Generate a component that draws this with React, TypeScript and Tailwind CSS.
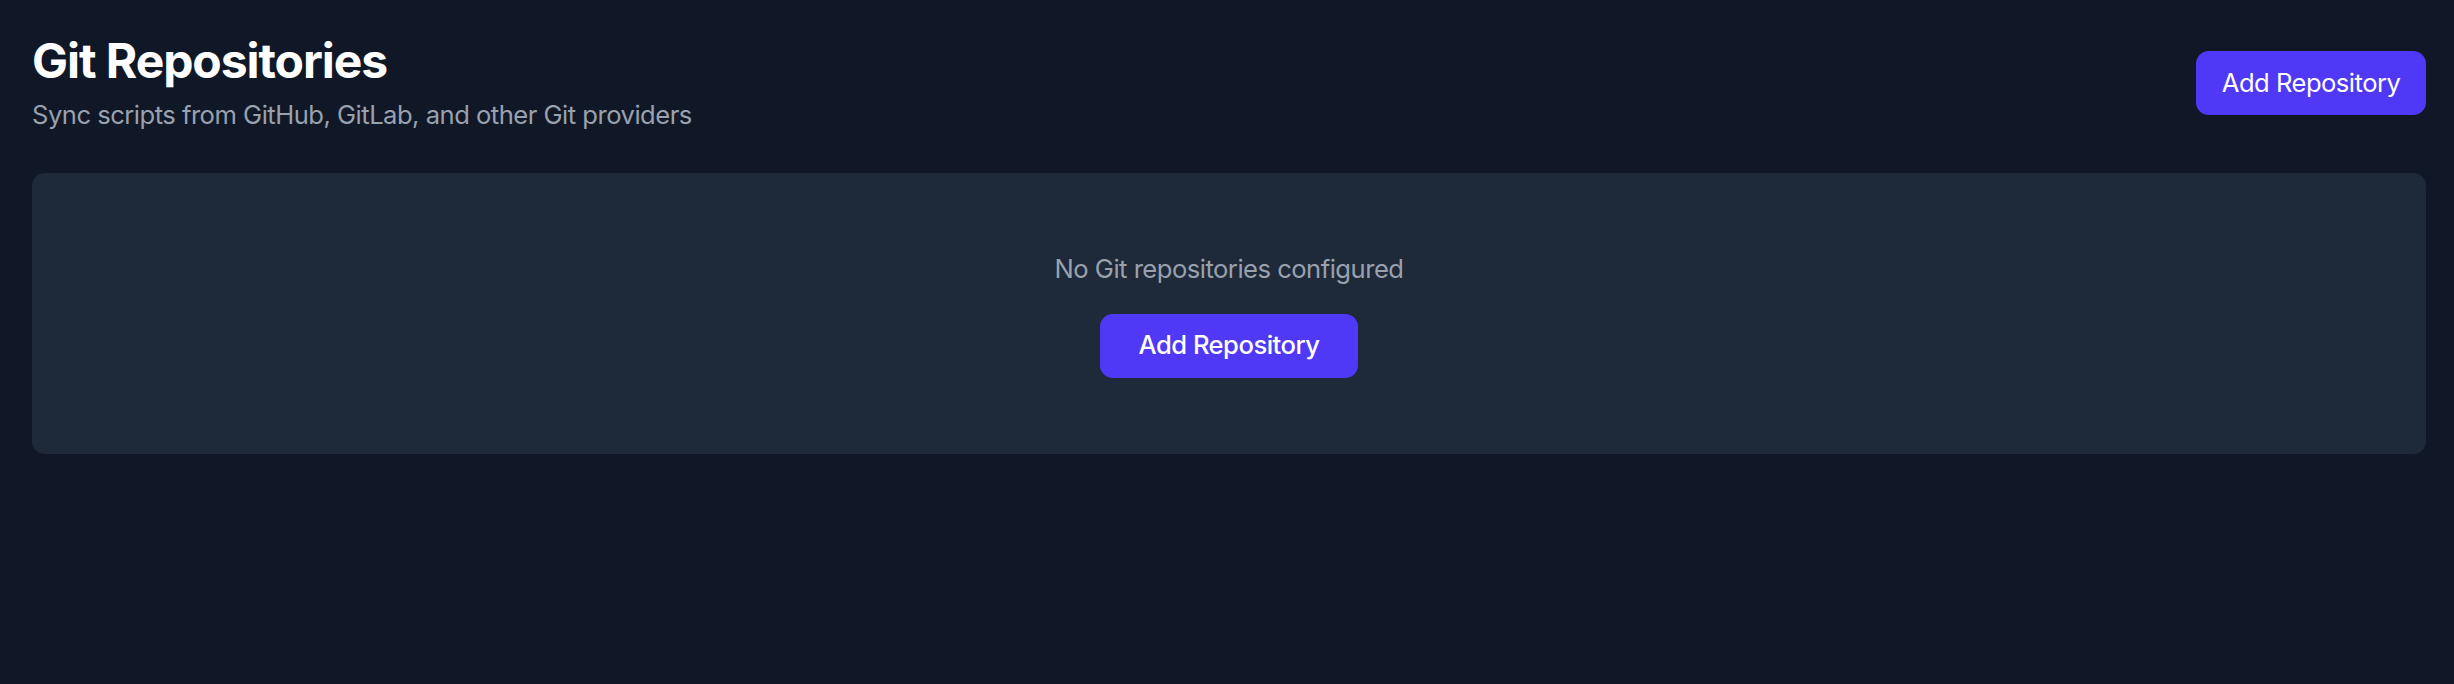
function AddButton({ wide }: { wide?: boolean }) {
  return (
    <button
      className={
        wide
          ? 'px-[38.4px] py-[12.8px] bg-indigo-600 hover:bg-indigo-700 text-white rounded-[12.8px] text-[25.6px] leading-[38.4px] font-medium tracking-[-0.02em]'
          : 'px-[25.6px] py-[12.8px] bg-indigo-600 hover:bg-indigo-700 text-white rounded-[12.8px] text-[25.6px] leading-[38.4px] tracking-[-0.02em]'
      }
    >
      Add Repository
    </button>
  );
}

export default function App() {
  return (
    <div className="min-h-screen bg-gray-900 pl-[32px] pr-[28px] pt-[32px] font-['Inter',sans-serif]">
      <div className="flex items-center justify-between mb-[38.4px]">
        <div>
          <h1 className="text-[48px] leading-[57.6px] font-bold text-white tracking-[-0.022em]">Git Repositories</h1>
          <p className="mt-[6.4px] text-[25.6px] leading-[38.4px] text-gray-400 tracking-[-0.02em]">
            Sync scripts from GitHub, GitLab, and other Git providers
          </p>
        </div>
        <AddButton />
      </div>
      <div className="bg-gray-800 rounded-[12.8px] py-[76.8px] text-center">
        <p className="text-[25.6px] leading-[38.4px] text-gray-400 mb-[25.6px] tracking-[-0.02em]">
          No Git repositories configured
        </p>
        <AddButton wide />
      </div>
    </div>
  );
}
